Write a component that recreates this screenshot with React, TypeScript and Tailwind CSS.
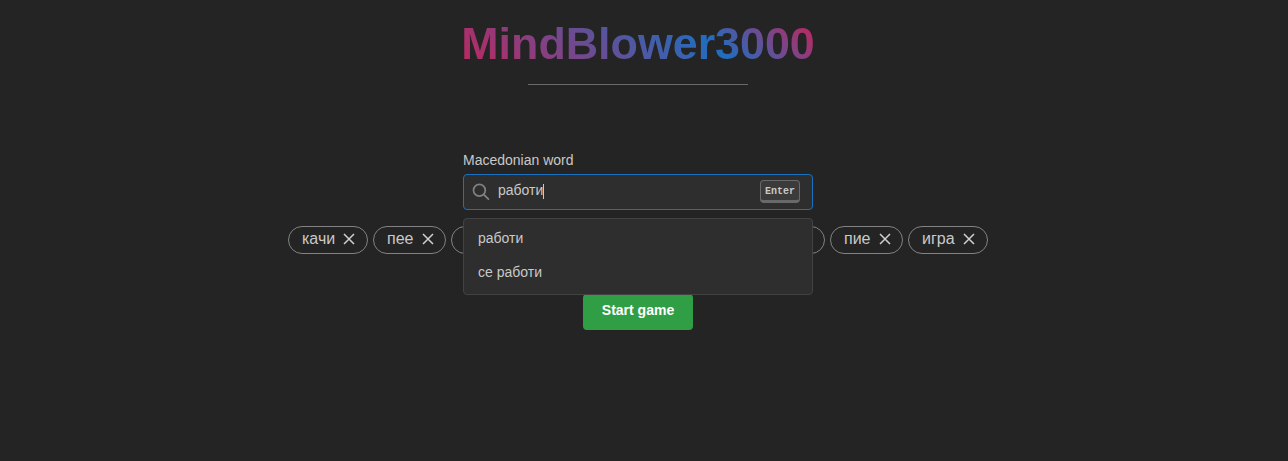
const Cross = () => (
  <svg width="18" height="18" viewBox="0 0 18 18" fill="none" stroke="#d0d0d0" strokeWidth="1.5" className="-mt-0.5 shrink-0">
    <path d="M4 4L14 14M14 4L4 14" />
  </svg>
);

const Tag = ({ word, size }: { word?: string; size: string }) => (
  <div className={`flex h-7 items-center justify-between rounded-full border border-[#828282] pl-[13px] text-base leading-6 ${size}`}>
    {word && <span className="-mt-0.5">{word}</span>}
    {word && <Cross />}
  </div>
);

export default function App() {
  return (
    <div className="min-h-[461px] bg-[#242424] pr-3 font-['Liberation_Sans',Arial,sans-serif] text-[#c9c9c9]">
      <div className="flex flex-col items-center pt-[13px]">
        <h1 className="bg-[linear-gradient(45deg,#c2255c_0%,#216dbf_68%,#c2255c_97%)] bg-clip-text text-[44.8px] leading-[60px] font-bold whitespace-nowrap text-transparent">
          MindBlower3000
        </h1>
        <hr className="mt-[11px] w-[220px] border-0 border-t border-[#696969]" />
        <div className="relative mt-[64px] w-[350px] text-sm">
          <label className="block h-[25px] leading-[22px]">Macedonian word</label>
          <div className="flex h-9 items-center rounded border border-[#1971c2] bg-[#2e2e2e] pr-3 pl-2">
            <svg width="20" height="20" viewBox="0 0 20 20" fill="none" stroke="#828282" strokeWidth="1.7">
              <circle cx="7.4" cy="8.2" r="5.9" />
              <path d="M11.6 12.4L16.9 17.7" />
            </svg>
            <span className="-mt-1 ml-1.5">работи</span>
            <span className="-mt-0.5 h-[15px] w-px bg-[#c9c9c9]" />
            <kbd className="-mt-0.5 ml-auto h-[23px] w-10 rounded border border-b-[3px] border-[#696969] bg-[#3b3b3b] text-center font-['Liberation_Mono',monospace] text-[10px] leading-[21px] font-bold">Enter</kbd>
          </div>
          <div className="absolute top-[69px] left-0 z-10 h-[77px] w-[350px] rounded border border-[#424242] bg-[#2e2e2e] px-[14px] pt-[2px]">
            <div className="h-[34px] leading-[34px]">работи</div>
            <div className="h-[34px] leading-[34px]">се работи</div>
          </div>
        </div>
        <div className="mt-4 flex gap-[5px]">
          <Tag word="качи" size="w-20 pr-[9px]" />
          <Tag word="пее" size="w-[73px] pr-2" />
          <Tag size="w-[374px]" />
          <Tag word="пие" size="w-[73px] pr-2" />
          <Tag word="игра" size="w-20 pr-[9px]" />
        </div>
        <button className="mt-10 h-9 w-[110px] rounded bg-[#2f9e44] pb-1 text-sm leading-5 font-bold text-white">Start game</button>
      </div>
    </div>
  );
}
